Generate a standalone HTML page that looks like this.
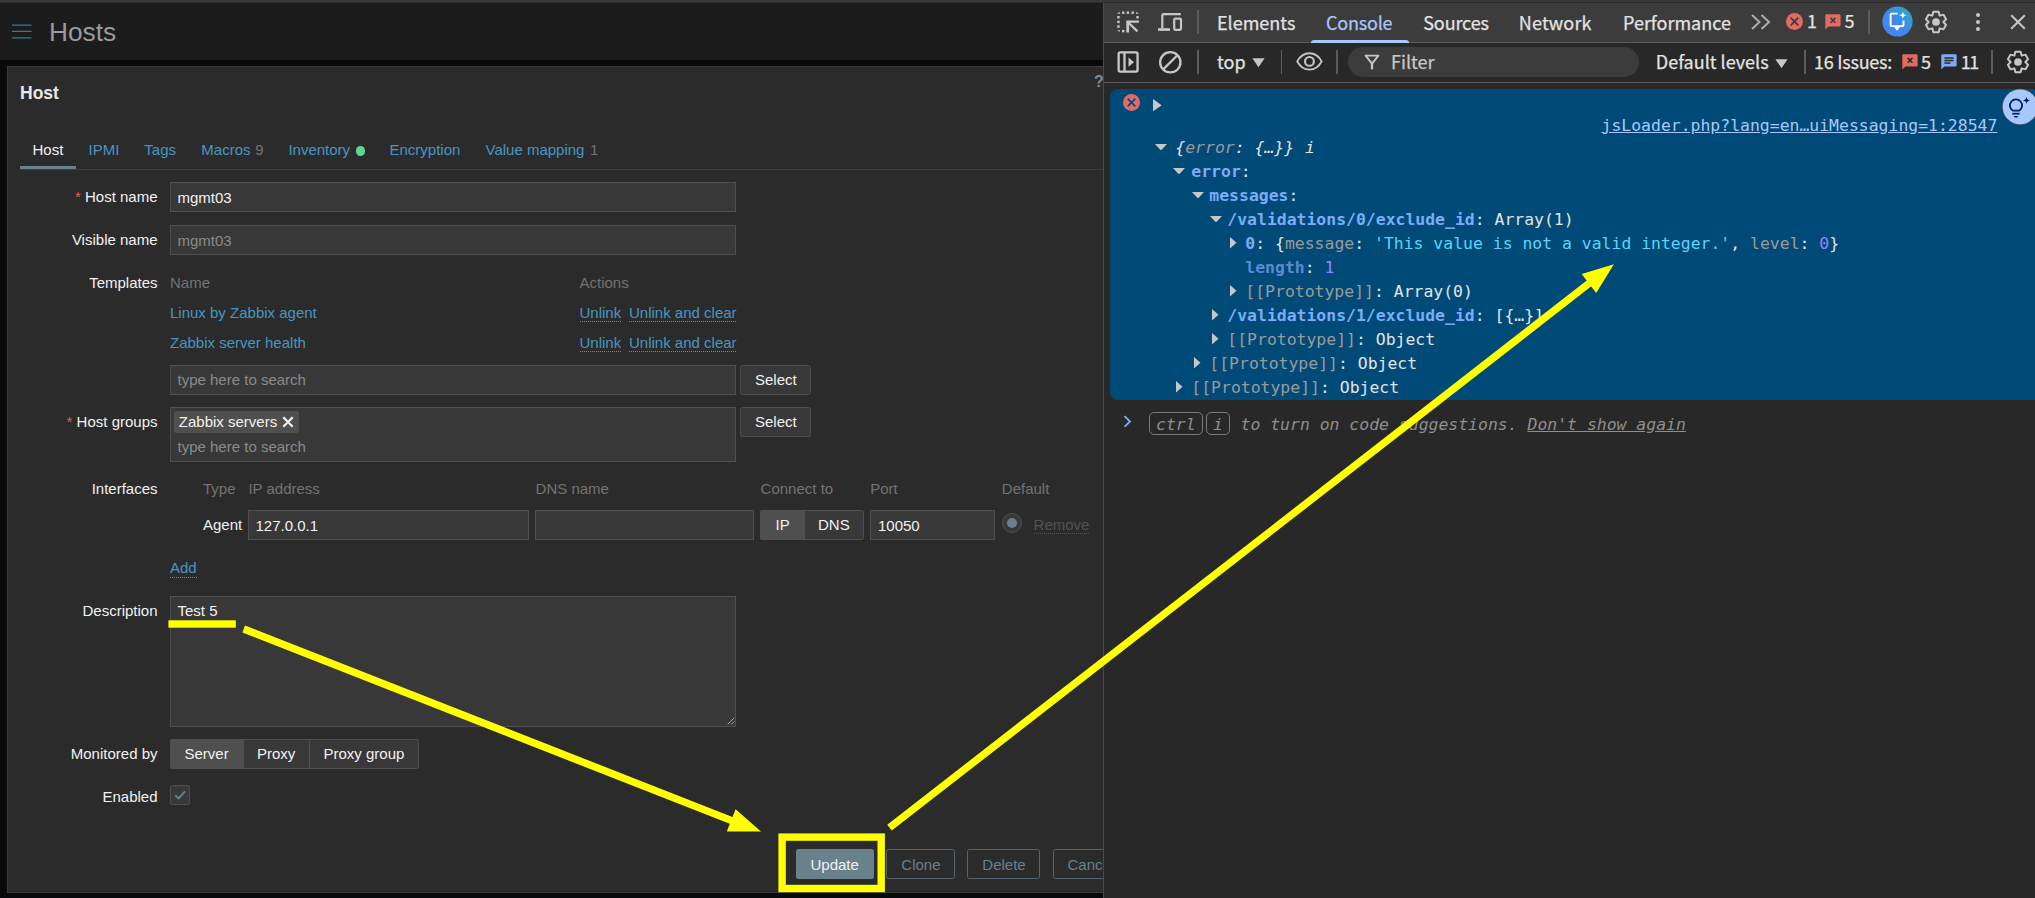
<!DOCTYPE html>
<html lang="en"><head><meta charset="utf-8"><title>Hosts</title>
<style>
html,body{margin:0;padding:0;background:#08090b;}
body{width:2035px;height:898px;overflow:hidden;position:relative;font-family:"Liberation Sans",Arial,sans-serif;}
#root{position:absolute;left:0;top:0;width:2035px;height:898px;overflow:hidden;}
#root div,#root span,#root svg{position:absolute;box-sizing:border-box;}
#root span{white-space:pre;line-height:1;}
#root span span{position:static;}
.inp{background:#383838;border:1px solid #4f4f4f;}
.lnk{color:#4796c4;}
.dot{border-bottom:1px dotted #4796c4;}
.m{font-family:"DejaVu Sans Mono","Liberation Mono",monospace;}
.b{font-weight:bold;}
.u{font-family:"Noto Sans CJK SC","Liberation Sans",sans-serif;}
.i{font-style:italic;}
.btn{border:1px solid #4f4f4f;background:#383838;border-radius:2.5px;}
.alt{border:1px solid #54656f;border-radius:2.5px;}
.vd{background:#5c5c5c;}
</style></head><body><div id="root">

<div style="left:0px;top:0px;width:2035px;height:3px;background:#2d2d2d;"></div>
<div style="left:0px;top:0px;width:2035px;height:2px;background:#383838;"></div>
<div style="left:0px;top:3px;width:1103px;height:57px;background:#1c1c1c;"></div>
<svg style="left:12px;top:22px;width:20px;height:20px" viewBox="0 0 20 20"><path d="M0 3.1 H19.5 M0 9.4 H19.5 M0 15.8 H19.5" stroke="#2f7aa5" stroke-width="1.25" fill="none"/></svg>
<span style="left:49px;top:19.00px;font-size:26.25px;color:#9b9b9b;">Hosts</span>
<div style="left:7px;top:66px;width:1110px;height:827px;background:#2b2b2b;border:1px solid #3a3a3a;"></div>
<span class="b" style="left:20px;top:85.00px;font-size:17.5px;color:#e8e8e8;">Host</span>
<span class="b" style="left:1094px;top:74.00px;font-size:16px;color:#768e9c;">?</span>
<div style="left:20px;top:169px;width:1083px;height:1px;background:#3d3d3d;"></div>
<div style="left:20px;top:166px;width:56px;height:3px;background:#69808d;"></div>
<span style="left:32.5px;top:142.00px;font-size:15px;color:#f2f2f2;">Host</span>
<span style="left:88.5px;top:142.00px;font-size:15px;color:#4796c4;">IPMI</span>
<span style="left:144.3px;top:142.00px;font-size:15px;color:#4796c4;">Tags</span>
<span style="left:201.3px;top:142.00px;font-size:15px;color:#4796c4;">Macros</span>
<span style="left:255.3px;top:142.00px;font-size:15px;color:#737373;">9</span>
<span style="left:288.4px;top:142.00px;font-size:15px;color:#4796c4;">Inventory</span>
<div style="left:356px;top:146.4px;width:9.2px;height:9.2px;background:#59db8f;border-radius:50%;"></div>
<span style="left:389.5px;top:142.00px;font-size:15px;color:#4796c4;">Encryption</span>
<span style="left:485.5px;top:142.00px;font-size:15px;color:#4796c4;">Value mapping</span>
<span style="left:590px;top:142.00px;font-size:15px;color:#737373;">1</span>
<span style="right:1877.5px;top:189.00px;font-size:15px;color:#f2f2f2;"><span style="color:#e45959">*</span> Host name</span>
<div class="inp" style="left:170px;top:182px;width:566px;height:30px;"></div>
<span style="left:177.5px;top:190.00px;font-size:15px;color:#f2f2f2;">mgmt03</span>
<span style="right:1877.5px;top:232.00px;font-size:15px;color:#f2f2f2;">Visible name</span>
<div class="inp" style="left:170px;top:225px;width:566px;height:30px;"></div>
<span style="left:177.5px;top:233.00px;font-size:15px;color:#8a8a8a;">mgmt03</span>
<span style="right:1877.5px;top:275.00px;font-size:15px;color:#f2f2f2;">Templates</span>
<span style="left:170px;top:275.00px;font-size:15px;color:#737373;">Name</span>
<span style="left:579.5px;top:275.00px;font-size:15px;color:#737373;">Actions</span>
<span style="left:170px;top:305.00px;font-size:15px;color:#4796c4;">Linux by Zabbix agent</span>
<span style="left:579.5px;top:305.00px;font-size:15px;color:#4796c4;">Unlink</span>
<div style="left:579.5px;top:320.8px;width:41.5px;height:1px;border-bottom:1px dotted #4796c4;"></div>
<span style="left:629px;top:305.00px;font-size:15px;color:#4796c4;">Unlink and clear</span>
<div style="left:629px;top:320.8px;width:107.3px;height:1px;border-bottom:1px dotted #4796c4;"></div>
<span style="left:170px;top:335.00px;font-size:15px;color:#4796c4;">Zabbix server health</span>
<span style="left:579.5px;top:335.00px;font-size:15px;color:#4796c4;">Unlink</span>
<div style="left:579.5px;top:350.7px;width:41.5px;height:1px;border-bottom:1px dotted #4796c4;"></div>
<span style="left:629px;top:335.00px;font-size:15px;color:#4796c4;">Unlink and clear</span>
<div style="left:629px;top:350.7px;width:107.3px;height:1px;border-bottom:1px dotted #4796c4;"></div>
<div class="inp" style="left:170px;top:365px;width:566px;height:30px;"></div>
<span style="left:177.5px;top:372.00px;font-size:15px;color:#8a8a8a;">type here to search</span>
<div class="btn" style="left:740px;top:365px;width:71px;height:30px;"></div>
<span style="left:755px;top:372.00px;font-size:15px;color:#f2f2f2;">Select</span>
<span style="right:1877.5px;top:414.00px;font-size:15px;color:#f2f2f2;"><span style="color:#e45959">*</span> Host groups</span>
<div class="inp" style="left:170px;top:407px;width:566px;height:54.5px;"></div>
<div style="left:174px;top:411px;width:125px;height:22px;background:#4f4f4f;border-radius:2.5px;"></div>
<span style="left:178.8px;top:414.00px;font-size:15px;color:#f2f2f2;">Zabbix servers</span>
<svg style="left:282px;top:416px;width:12px;height:12px" viewBox="0 0 12 12"><path d="M1.3 1.3 L10.7 10.7 M10.7 1.3 L1.3 10.7" stroke="#f2f2f2" stroke-width="2.2" fill="none"/></svg>
<span style="left:177.5px;top:439.00px;font-size:15px;color:#8a8a8a;">type here to search</span>
<div class="btn" style="left:740px;top:407px;width:71px;height:30px;"></div>
<span style="left:755px;top:414.00px;font-size:15px;color:#f2f2f2;">Select</span>
<span style="right:1877.5px;top:481.00px;font-size:15px;color:#f2f2f2;">Interfaces</span>
<span style="left:203px;top:481.00px;font-size:15px;color:#737373;">Type</span>
<span style="left:248.4px;top:481.00px;font-size:15px;color:#737373;">IP address</span>
<span style="left:535.6px;top:481.00px;font-size:15px;color:#737373;">DNS name</span>
<span style="left:760.6px;top:481.00px;font-size:15px;color:#737373;">Connect to</span>
<span style="left:870.2px;top:481.00px;font-size:15px;color:#737373;">Port</span>
<span style="left:1001.8px;top:481.00px;font-size:15px;color:#737373;">Default</span>
<span style="left:203px;top:517.00px;font-size:15px;color:#f2f2f2;">Agent</span>
<div class="inp" style="left:248px;top:510px;width:281px;height:30px;"></div>
<span style="left:255.5px;top:518.00px;font-size:15px;color:#f2f2f2;">127.0.0.1</span>
<div class="inp" style="left:535px;top:510px;width:219px;height:30px;"></div>
<div style="left:760px;top:510px;width:104px;height:30px;background:#383838;border:1px solid #4f4f4f;border-radius:2.5px;"></div>
<div style="left:760px;top:510px;width:44.5px;height:30px;background:#4f4f4f;border-radius:2.5px 0 0 2.5px;"></div>
<span style="left:775.5px;top:517.00px;font-size:15px;color:#f2f2f2;">IP</span>
<span style="left:818px;top:517.00px;font-size:15px;color:#f2f2f2;">DNS</span>
<div class="inp" style="left:870px;top:510px;width:125px;height:30px;"></div>
<span style="left:878px;top:518.00px;font-size:15px;color:#f2f2f2;">10050</span>
<div style="left:1001.5px;top:513.3px;width:20px;height:20px;border-radius:50%;background:#383838;border:1px solid #4f4f4f;"></div>
<div style="left:1006.5px;top:518.3px;width:10px;height:10px;border-radius:50%;background:#69808d;"></div>
<span style="left:1033.6px;top:517.00px;font-size:15px;color:#525252;">Remove</span>
<div style="left:1033.6px;top:533px;width:55px;height:1px;border-bottom:1px dotted #525252;"></div>
<span style="left:170px;top:560.00px;font-size:15px;color:#4796c4;">Add</span>
<div style="left:170px;top:576.7px;width:26.7px;height:1px;border-bottom:1px dotted #4796c4;"></div>
<span style="right:1877.5px;top:603.00px;font-size:15px;color:#f2f2f2;">Description</span>
<div class="inp" style="left:170px;top:596px;width:566px;height:130.5px;"></div>
<span style="left:177.5px;top:603.00px;font-size:15px;color:#f2f2f2;">Test 5</span>
<svg style="left:726px;top:716px;width:9px;height:9px" viewBox="0 0 9 9"><path d="M8.3 1.7 L1.7 8.3 M8.3 5.4 L5.4 8.3" stroke="#a8a8a8" stroke-width="1" fill="none"/></svg>
<span style="right:1877.5px;top:746.00px;font-size:15px;color:#f2f2f2;">Monitored by</span>
<div style="left:170px;top:739px;width:249px;height:30px;background:#383838;border:1px solid #4f4f4f;border-radius:2.5px;"></div>
<div style="left:170px;top:739px;width:73.5px;height:30px;background:#4f4f4f;border-radius:2.5px 0 0 2.5px;"></div>
<div style="left:309px;top:740px;width:1px;height:28px;background:#4f4f4f;"></div>
<span style="left:184.5px;top:746.00px;font-size:15px;color:#f2f2f2;">Server</span>
<span style="left:257px;top:746.00px;font-size:15px;color:#f2f2f2;">Proxy</span>
<span style="left:323.5px;top:746.00px;font-size:15px;color:#f2f2f2;">Proxy group</span>
<span style="right:1877.5px;top:789.00px;font-size:15px;color:#f2f2f2;">Enabled</span>
<div style="left:170px;top:785px;width:20px;height:20px;background:#383838;border:1px solid #4f4f4f;border-radius:2.5px;"></div>
<svg style="left:172px;top:787px;width:16px;height:16px" viewBox="0 0 16 16"><path d="M3.2 8.2 L6.6 11.4 L13 4.4" stroke="#69808d" stroke-width="1.9" fill="none"/></svg>
<div style="left:796px;top:849px;width:78px;height:30px;background:#69808d;border-radius:2.5px;"></div>
<span style="left:810.5px;top:857.00px;font-size:15px;color:#f2f2f2;">Update</span>
<div class="alt" style="left:886px;top:849px;width:69px;height:30px;"></div>
<span style="left:901.3px;top:857.00px;font-size:15px;color:#69808d;">Clone</span>
<div class="alt" style="left:967px;top:849px;width:73px;height:30px;"></div>
<span style="left:982.3px;top:857.00px;font-size:15px;color:#69808d;">Delete</span>
<div class="alt" style="left:1053px;top:849px;width:80px;height:30px;"></div>
<span style="left:1067.5px;top:857.00px;font-size:15px;color:#69808d;">Cancel</span>
<div style="left:1103px;top:3px;width:932px;height:895px;background:#282828;"></div>
<div style="left:1103px;top:3px;width:1px;height:895px;background:#4a4a4a;"></div>
<div style="left:1104px;top:3px;width:931px;height:39px;background:#3c3c3c;"></div>
<div style="left:1104px;top:42px;width:931px;height:1px;background:#5e5e5e;"></div>
<div style="left:1104px;top:82px;width:931px;height:1px;background:#5e5e5e;"></div>
<svg style="left:1116px;top:10px;width:24px;height:24px" viewBox="0 0 24 24" fill="#c7c7c7"><rect x="6.00" y="1.50" width="2.4" height="2.4"/><rect x="10.70" y="1.50" width="2.4" height="2.4"/><rect x="15.50" y="1.50" width="2.4" height="2.4"/><rect x="1.25" y="6.00" width="2.4" height="2.4"/><rect x="1.25" y="10.70" width="2.4" height="2.4"/><rect x="1.25" y="15.30" width="2.4" height="2.4"/><rect x="20.30" y="6.00" width="2.4" height="2.4"/><rect x="6.00" y="19.90" width="2.4" height="2.4"/><path d="M3.65 1.50 L3.65 3.90 L1.25 3.90 Z"/><path d="M20.30 1.50 L22.70 3.90 L20.30 3.90 Z"/><path d="M1.25 19.90 L3.65 19.90 L3.65 22.30 Z"/><path d="M10.3 10.5 H22.9 V12.7 H13.1 V22.5 H10.3 Z"/><path d="M11.6 11.8 L21.4 21.4" stroke="#c7c7c7" stroke-width="2.3" fill="none"/></svg>
<svg style="left:1156px;top:10px;width:28px;height:24px" viewBox="0 0 28 24" fill="none" stroke="#c7c7c7" stroke-width="2.2"><path d="M6.3 18.2 V5.65 A1.5 1.5 0 0 1 7.8 4.15 H24.8"/><rect x="2" y="18.2" width="12" height="2.7" fill="#c7c7c7" stroke="none"/><rect x="18.2" y="8.7" width="6.8" height="11.1" rx="1.2"/></svg>
<div class="vd" style="left:1197px;top:10px;width:2px;height:24px;"></div>
<span class="u" style="left:1217px;top:13.00px;font-size:18px;color:#e3e3e3;letter-spacing:0px;-webkit-text-stroke:0.25px;">Elements</span>
<span class="u" style="left:1326px;top:13.00px;font-size:18px;color:#a8c7fa;letter-spacing:-0.2px;-webkit-text-stroke:0.25px;">Console</span>
<div style="left:1311px;top:40px;width:98px;height:3px;background:#a8c7fa;border-radius:3px 3px 0 0;"></div>
<span class="u" style="left:1423.3px;top:13.00px;font-size:18px;color:#e3e3e3;letter-spacing:-0.15px;-webkit-text-stroke:0.25px;">Sources</span>
<span class="u" style="left:1518.8px;top:13.00px;font-size:18px;color:#e3e3e3;letter-spacing:0.15px;-webkit-text-stroke:0.25px;">Network</span>
<span class="u" style="left:1623px;top:13.00px;font-size:18px;color:#e3e3e3;letter-spacing:0px;-webkit-text-stroke:0.25px;">Performance</span>
<svg style="left:1750px;top:13px;width:22px;height:18px" viewBox="0 0 22 18" fill="none" stroke="#adadad" stroke-width="2"><path d="M2 2 L9.5 9 L2 16 M11.5 2 L19 9 L11.5 16"/></svg>
<svg style="left:1786.0px;top:12.899999999999999px;width:17.0px;height:17.0px" viewBox="0 0 17 17"><circle cx="8.5" cy="8.5" r="8.5" fill="#e46962"/><path d="M4.7 4.7 L12.3 12.3 M12.3 4.7 L4.7 12.3" stroke="#3c3c3c" stroke-width="1.65" fill="none"/></svg>
<span class="u" style="left:1807px;top:11.00px;font-size:18px;color:#e3e3e3;letter-spacing:0px;-webkit-text-stroke:0.25px;">1</span>
<svg style="left:1825.4px;top:14.4px;width:16px;height:15.5px" viewBox="0 0 16 15.5"><path d="M1.3 0.3 H14.6 A1 1 0 0 1 15.6 1.3 V11.6 A1 1 0 0 1 14.6 12.6 H3.4 L0.3 15.4 V1.3 A1 1 0 0 1 1.3 0.3 Z" fill="#e46962"/><path d="M5.6 3.9 L10.4 8.7 M10.4 3.9 L5.6 8.7" stroke="#3c3c3c" stroke-width="1.5" fill="none"/></svg>
<span class="u" style="left:1844.5px;top:11.00px;font-size:18px;color:#e3e3e3;letter-spacing:0px;-webkit-text-stroke:0.25px;">5</span>
<div class="vd" style="left:1868px;top:10px;width:2px;height:24px;"></div>
<svg style="left:1881.5px;top:6.4px;width:31px;height:31px" viewBox="0 0 31 31"><defs><linearGradient id="ag" x1="0.1" y1="0.9" x2="0.9" y2="0.1"><stop offset="0" stop-color="#4285f4"/><stop offset="0.5" stop-color="#3f8aec"/><stop offset="1" stop-color="#2ba6c6"/></linearGradient></defs><circle cx="15.5" cy="15.5" r="15.1" fill="url(#ag)"/><path d="M15.6 7.6 H9.4 A0.8 0.8 0 0 0 8.6 8.4 V19.3 A0.8 0.8 0 0 0 9.4 20.1 H20.7 A0.8 0.8 0 0 0 21.5 19.3 V14.5" fill="none" stroke="#fff" stroke-width="1.9"/><path d="M11.6 20.6 H18.5 L15.05 24.7 Z" fill="#fff"/><path d="M20.9 5.5 C21.3 7.9 22.1 8.8 24.6 9.2 C22.1 9.6 21.3 10.5 20.9 12.9 C20.5 10.5 19.7 9.6 17.2 9.2 C19.7 8.8 20.5 7.9 20.9 5.5 Z" fill="#fff"/></svg>
<svg style="left:1923px;top:9px;width:26px;height:26px" viewBox="-13 -13 26 26"><path d="M3.67 -6.37 L2.60 -10.20 L-2.60 -10.20 L-3.68 -6.37 L-7.53 -7.35 L-10.13 -2.85 L-7.35 0.00 L-10.13 2.85 L-7.53 7.35 L-3.68 6.37 L-2.60 10.20 L2.60 10.20 L3.67 6.37 L7.53 7.35 L10.13 2.85 L7.35 0.00 L10.13 -2.85 L7.53 -7.35 Z" fill="none" stroke="#c7c7c7" stroke-width="2" stroke-linejoin="round"/><circle cx="0" cy="0" r="3.85" fill="#c7c7c7"/></svg>
<div style="left:1975.6px;top:13.100000000000001px;width:4.4px;height:4.4px;background:#c7c7c7;border-radius:50%;"></div>
<div style="left:1975.6px;top:19.8px;width:4.4px;height:4.4px;background:#c7c7c7;border-radius:50%;"></div>
<div style="left:1975.6px;top:26.6px;width:4.4px;height:4.4px;background:#c7c7c7;border-radius:50%;"></div>
<svg style="left:2010px;top:14px;width:16px;height:16px" viewBox="0 0 16 16"><path d="M1.2 1.2 L14.8 14.8 M14.8 1.2 L1.2 14.8" stroke="#c7c7c7" stroke-width="2" fill="none"/></svg>
<svg style="left:1116px;top:50px;width:24px;height:24px" viewBox="0 0 24 24" fill="none" stroke="#c7c7c7" stroke-width="2.3"><rect x="2.65" y="2.45" width="18.9" height="19.1" rx="1.6"/><path d="M8.5 2.45 V21.55"/><path d="M12.5 7.6 L18 12.2 L12.5 16.8 Z" fill="#c7c7c7" stroke="none"/></svg>
<svg style="left:1157.7px;top:49.7px;width:24.6px;height:24.6px" viewBox="0 0 24.6 24.6" fill="none" stroke="#c7c7c7" stroke-width="2.3"><circle cx="12.3" cy="12.3" r="10.15"/><path d="M5.2 19.4 L19.4 5.2"/></svg>
<div class="vd" style="left:1197px;top:50px;width:2px;height:24px;"></div>
<span class="u" style="left:1217px;top:52.00px;font-size:18px;color:#e3e3e3;letter-spacing:0px;-webkit-text-stroke:0.25px;">top</span>
<svg style="left:1251.8px;top:58px;width:13px;height:9.5px" viewBox="0 0 13 9.5"><path d="M0.4 0.3 H12.6 L6.5 9.2 Z" fill="#c7c7c7"/></svg>
<div class="vd" style="left:1281px;top:50px;width:1px;height:24px;"></div>
<svg style="left:1295.7px;top:52.3px;width:26.9px;height:18.8px" viewBox="0 0 28 19.5" fill="none" stroke="#c7c7c7" stroke-width="2"><path d="M1.3 9.75 C4.5 3.6 9 1.2 14 1.2 C19 1.2 23.5 3.6 26.7 9.75 C23.5 15.9 19 18.3 14 18.3 C9 18.3 4.5 15.9 1.3 9.75 Z"/><circle cx="14" cy="9.75" r="4.6" stroke-width="2.2"/></svg>
<div class="vd" style="left:1336px;top:50px;width:2px;height:24px;"></div>
<div style="left:1348px;top:47px;width:291px;height:30px;background:#3c3c3c;border-radius:15px;"></div>
<svg style="left:1364px;top:54px;width:16px;height:16.5px" viewBox="0 0 16 16.5" fill="none" stroke="#c7c7c7" stroke-width="1.9"><path d="M1.6 1.6 H14.4 L8 9.6 Z" stroke-linejoin="round"/><path d="M8 9 V15.3" stroke-width="2.2"/></svg>
<span class="u" style="left:1391px;top:52.00px;font-size:18px;color:#c7c7c7;letter-spacing:0px;-webkit-text-stroke:0.25px;">Filter</span>
<span class="u" style="left:1655.8px;top:52.00px;font-size:18px;color:#e3e3e3;letter-spacing:0px;-webkit-text-stroke:0.25px;">Default levels</span>
<svg style="left:1775px;top:58.5px;width:13px;height:9.5px" viewBox="0 0 13 9.5"><path d="M0.4 0.3 H12.6 L6.5 9.2 Z" fill="#c7c7c7"/></svg>
<div class="vd" style="left:1804px;top:50px;width:2px;height:24px;"></div>
<span class="u" style="left:1814px;top:52.00px;font-size:18px;color:#e3e3e3;letter-spacing:-0.25px;-webkit-text-stroke:0.25px;">16 Issues:</span>
<svg style="left:1902.3px;top:54.3px;width:16px;height:15.5px" viewBox="0 0 16 15.5"><path d="M1.3 0.3 H14.6 A1 1 0 0 1 15.6 1.3 V11.6 A1 1 0 0 1 14.6 12.6 H3.4 L0.3 15.4 V1.3 A1 1 0 0 1 1.3 0.3 Z" fill="#e46962"/><path d="M5.6 3.9 L10.4 8.7 M10.4 3.9 L5.6 8.7" stroke="#282828" stroke-width="1.5" fill="none"/></svg>
<span class="u" style="left:1921px;top:52.00px;font-size:18px;color:#e3e3e3;letter-spacing:0px;-webkit-text-stroke:0.25px;">5</span>
<svg style="left:1941px;top:54.3px;width:16px;height:15.5px" viewBox="0 0 16 15.5"><path d="M1.3 0.3 H14.6 A1 1 0 0 1 15.6 1.3 V11.6 A1 1 0 0 1 14.6 12.6 H3.4 L0.3 15.4 V1.3 A1 1 0 0 1 1.3 0.3 Z" fill="#7cacf8"/><path d="M3.4 4 H12.6 M3.4 6.5 H12.6 M3.4 9 H9.6" stroke="#282828" stroke-width="1.45" fill="none"/></svg>
<span class="u" style="left:1960.8px;top:52.00px;font-size:18px;color:#e3e3e3;letter-spacing:-1.6px;-webkit-text-stroke:0.25px;">11</span>
<div class="vd" style="left:1991px;top:50px;width:2px;height:24px;"></div>
<svg style="left:2004.8px;top:49.2px;width:26px;height:26px" viewBox="-13 -13 26 26"><path d="M3.67 -6.37 L2.60 -10.20 L-2.60 -10.20 L-3.68 -6.37 L-7.53 -7.35 L-10.13 -2.85 L-7.35 0.00 L-10.13 2.85 L-7.53 7.35 L-3.68 6.37 L-2.60 10.20 L2.60 10.20 L3.67 6.37 L7.53 7.35 L10.13 2.85 L7.35 0.00 L10.13 -2.85 L7.53 -7.35 Z" fill="none" stroke="#c7c7c7" stroke-width="2" stroke-linejoin="round"/><circle cx="0" cy="0" r="3.85" fill="#c7c7c7"/></svg>
<div style="left:1110px;top:89px;width:930px;height:311px;background:#004a77;border-radius:8px 0 0 8px;"></div>
<svg style="left:1123.0px;top:94.1px;width:17.0px;height:17.0px" viewBox="0 0 17 17"><circle cx="8.5" cy="8.5" r="8.5" fill="#e46962"/><path d="M4.7 4.7 L12.3 12.3 M12.3 4.7 L4.7 12.3" stroke="#004a77" stroke-width="1.65" fill="none"/></svg>
<svg style="left:1153px;top:98.85px;width:8.7px;height:12.3px" viewBox="0 0 8.7 12.3"><path d="M0 0 L8.7 6.15 L0 12.3 Z" fill="#c7c7c7"/></svg>
<span class="m" style="left:1601.5px;top:118.00px;font-size:16.45px;color:#a8c7fa;text-decoration:underline;">jsLoader.php?lang=en…uiMessaging=1:28547</span>
<svg style="left:1155px;top:143.75px;width:12px;height:6.5px" viewBox="0 0 12 6.5"><path d="M0 0 H12 L6.0 6.5 Z" fill="#c7c7c7"/></svg>
<span class="m i" style="left:1175.3px;top:140.00px;font-size:16.45px;color:#e3e3e3;"><span style="color:#e3e3e3">{</span><span style="color:#9a9a9a">error</span><span style="color:#e3e3e3">: {…}}</span></span>
<span class="m i" style="left:1305px;top:140.00px;font-size:16.45px;color:#e3e3e3;">i</span>
<svg style="left:1173.3px;top:167.75px;width:12px;height:6.5px" viewBox="0 0 12 6.5"><path d="M0 0 H12 L6.0 6.5 Z" fill="#c7c7c7"/></svg>
<span class="m" style="left:1191.3px;top:164.00px;font-size:16.45px;color:#e3e3e3;"><span class="b" style="color:#7cacf8">error</span>:</span>
<svg style="left:1191.5px;top:191.75px;width:12px;height:6.5px" viewBox="0 0 12 6.5"><path d="M0 0 H12 L6.0 6.5 Z" fill="#c7c7c7"/></svg>
<span class="m" style="left:1209.3px;top:188.00px;font-size:16.45px;color:#e3e3e3;"><span class="b" style="color:#7cacf8">messages</span>:</span>
<svg style="left:1209.5px;top:215.75px;width:12px;height:6.5px" viewBox="0 0 12 6.5"><path d="M0 0 H12 L6.0 6.5 Z" fill="#c7c7c7"/></svg>
<span class="m" style="left:1227.3px;top:212.00px;font-size:16.45px;color:#e3e3e3;"><span class="b" style="color:#7cacf8">/validations/0/exclude_id</span>: Array(1)</span>
<svg style="left:1230px;top:237.25px;width:6.5px;height:11.5px" viewBox="0 0 6.5 11.5"><path d="M0 0 L6.5 5.75 L0 11.5 Z" fill="#c7c7c7"/></svg>
<span class="m" style="left:1245.3px;top:236.00px;font-size:16.45px;color:#e3e3e3;"><span class="b" style="color:#7cacf8">0</span>: {<span style="color:#9a9a9a">message</span>: <span style="color:#5cd5fb">'This value is not a valid integer.'</span>, <span style="color:#9a9a9a">level</span>: <span style="color:#9980ff">0</span>}</span>
<span class="m" style="left:1245.3px;top:260.00px;font-size:16.45px;color:#e3e3e3;"><span class="b" style="color:#5b8ad0">length</span>: <span style="color:#9980ff">1</span></span>
<svg style="left:1230px;top:285.25px;width:6.5px;height:11.5px" viewBox="0 0 6.5 11.5"><path d="M0 0 L6.5 5.75 L0 11.5 Z" fill="#c7c7c7"/></svg>
<span class="m" style="left:1245.3px;top:284.00px;font-size:16.45px;color:#e3e3e3;"><span style="color:#9a9a9a">[[Prototype]]</span>: Array(0)</span>
<svg style="left:1212px;top:309.25px;width:6.5px;height:11.5px" viewBox="0 0 6.5 11.5"><path d="M0 0 L6.5 5.75 L0 11.5 Z" fill="#c7c7c7"/></svg>
<span class="m" style="left:1227.3px;top:308.00px;font-size:16.45px;color:#e3e3e3;"><span class="b" style="color:#7cacf8">/validations/1/exclude_id</span>: [{…}]</span>
<svg style="left:1212px;top:333.25px;width:6.5px;height:11.5px" viewBox="0 0 6.5 11.5"><path d="M0 0 L6.5 5.75 L0 11.5 Z" fill="#c7c7c7"/></svg>
<span class="m" style="left:1227.3px;top:332.00px;font-size:16.45px;color:#e3e3e3;"><span style="color:#9a9a9a">[[Prototype]]</span>: Object</span>
<svg style="left:1194px;top:357.25px;width:6.5px;height:11.5px" viewBox="0 0 6.5 11.5"><path d="M0 0 L6.5 5.75 L0 11.5 Z" fill="#c7c7c7"/></svg>
<span class="m" style="left:1209.3px;top:356.00px;font-size:16.45px;color:#e3e3e3;"><span style="color:#9a9a9a">[[Prototype]]</span>: Object</span>
<svg style="left:1176px;top:381.25px;width:6.5px;height:11.5px" viewBox="0 0 6.5 11.5"><path d="M0 0 L6.5 5.75 L0 11.5 Z" fill="#c7c7c7"/></svg>
<span class="m" style="left:1191.3px;top:380.00px;font-size:16.45px;color:#e3e3e3;"><span style="color:#9a9a9a">[[Prototype]]</span>: Object</span>
<svg style="left:2001px;top:88px;width:38px;height:38px" viewBox="0 0 38 38"><circle cx="19.1" cy="18.8" r="18.1" fill="#5e5a58" opacity="0.75"/><circle cx="19.1" cy="18.8" r="17.4" fill="#a8c7fa"/><g fill="none" stroke="#041e6b" stroke-width="1.75"><path d="M11.65 22.6 A6.1 6.1 0 1 1 18.35 22.6 Z" stroke-linejoin="round"/><path d="M11.3 25.7 H18.7"/></g><path d="M12.9 28 H17.1 A2.1 1.7 0 0 1 12.9 28 Z" fill="#041e6b"/><path d="M25.5 8.8 C25.9 11.2 26.7 12 29.1 12.4 C26.7 12.8 25.9 13.6 25.5 16 C25.1 13.6 24.3 12.8 21.9 12.4 C24.3 12 25.1 11.2 25.5 8.8 Z" fill="#041e6b"/></svg>
<svg style="left:1122.5px;top:414.6px;width:9px;height:13px" viewBox="0 0 9 13"><path d="M1.5 1.2 L7 6.5 L1.5 11.8" stroke="#7cacf8" stroke-width="1.8" fill="none"/></svg>
<div style="left:1148.8px;top:412.2px;width:54px;height:22.6px;border:1px solid #7a7a7a;border-radius:5px;"></div>
<div style="left:1206px;top:412.2px;width:24px;height:22.6px;border:1px solid #7a7a7a;border-radius:5px;"></div>
<span class="m i" style="left:1156px;top:417.00px;font-size:16.45px;color:#8f8f8f;">ctrl</span>
<span class="m i" style="left:1213px;top:417.00px;font-size:16.45px;color:#8f8f8f;">i</span>
<span class="m i" style="left:1240.5px;top:417.00px;font-size:16.45px;color:#8f8f8f;">to turn on code suggestions. <span style="text-decoration:underline">Don't show again</span></span>
<svg style="left:0;top:0;width:2035px;height:898px" viewBox="0 0 2035 898">
<g fill="#ffff00" stroke="none">
<rect x="168.4" y="620.3" width="67.4" height="7.4"/>
</g><g fill="none" stroke="#ffff00" stroke-width="7.4">
<rect x="782.1" y="837.1" width="99.1" height="51.4"/>
<path d="M243.7 629 L733 821.1"/>
<path d="M889.5 827.7 L1590 282.7"/>
</g><g fill="#ffff00" stroke="none">
<path d="M761 831.6 L735.6 809.2 L726.8 831.6 Z"/>
<path d="M1613.9 264.3 L1581.7 274.1 L1596.2 293 Z"/>
</g></svg>
</div></body></html>
